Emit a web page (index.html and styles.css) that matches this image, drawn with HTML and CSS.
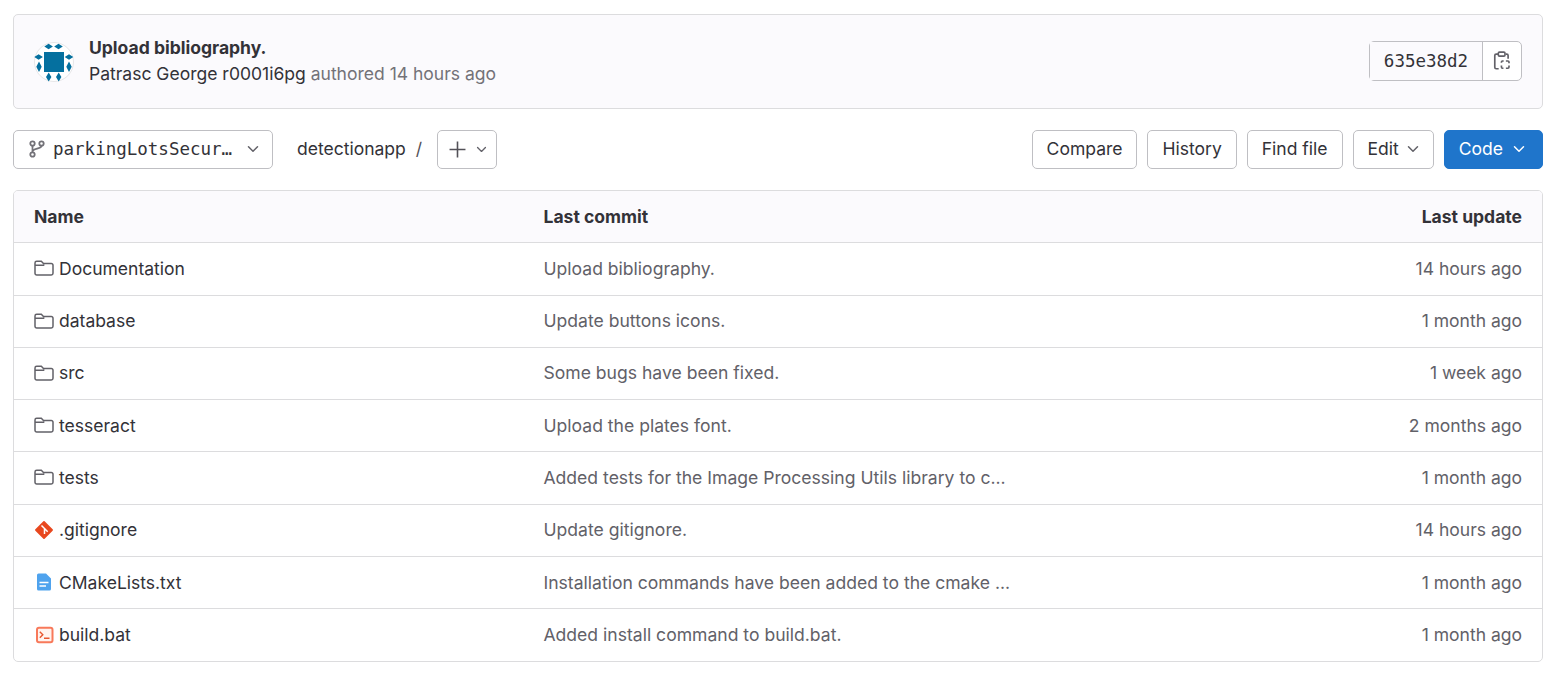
FILE: index.html
```html
<!DOCTYPE html>
<html lang="en">
<head>
<meta charset="utf-8">
<title>detectionapp</title>
<link rel="stylesheet" href="styles.css">
</head>
<body>
<svg class="defs" width="0" height="0" aria-hidden="true">
  <symbol id="folder" viewBox="0 0 20 16"><path d="M1 3A1.700 1.700 0 0 1 2.700 1.300h4.600l2.200 2.200h7.800A1.700 1.700 0 0 1 19 5.200v8.100a1.700 1.700 0 0 1-1.700 1.700H2.700A1.700 1.700 0 0 1 1 13.300z" fill="none" stroke="#626168" stroke-width="1.500"/><path d="M1 5.300h8.500l.8-.8" fill="none" stroke="#626168" stroke-width="1.500"/></symbol>
  <symbol id="chev" viewBox="0 0 12 8"><path d="M1.500 1.700 6 6.200l4.500-4.500" fill="none" stroke="currentColor" stroke-width="1.500" stroke-linecap="round" stroke-linejoin="round"/></symbol>
</svg>
<main class="page">
  <section class="commit">
    <div class="avatar">
      <svg width="40" height="40" viewBox="0 0 40 40">
        <circle cx="20" cy="20" r="19.500" fill="#fff" stroke="#e6e6e8"/>
        <rect x="10" y="10" width="20" height="20" fill="#05709f"/>
        <g fill="#05709f">
          <path d="M10.300 4.500l4.300-2.700 4.300 2.700-4.300 2.700zM20.200 4.500l4.300-2.700 4.300 2.700-4.300 2.700zM.3 15l4.300-2.700 4.300 2.700-4.300 2.700zM30.700 15l4.300-2.700 4.300 2.700-4.300 2.700zM5 19.500l2.700 5.200-2.700 5.200-2.700-5.200zM35 19.500l2.700 5.200-2.700 5.200-2.700-5.200zM14.700 30.500l2.700 4.500-2.700 4.500-2.700-4.500zM24.700 30.500l2.700 4.500-2.700 4.500-2.700-4.500z"/>
        </g>
      </svg>
    </div>
    <div class="commit-text">
      <div class="commit-title">Upload bibliography.</div>
      <div class="commit-meta"><span class="author">Patrasc George r0001i6pg</span> authored 14 hours ago</div>
    </div>
    <div class="sha-group">
      <span class="sha">635e38d2</span>
      <span class="copy">
        <svg width="18" height="20" viewBox="0 0 16 18" fill="none" stroke="#626168" stroke-width="1.500"><path d="M4.500 2.800H2.800A1.300 1.300 0 0 0 1.500 4.100v10.600A1.300 1.300 0 0 0 2.800 16H5M11.500 2.800h.7A1.300 1.300 0 0 1 13.500 4.100V7"/><rect x="4.700" y="1" width="6" height="3.600" rx="1"/><path d="M7.500 10.500V10a1 1 0 0 1 1-1h1M11.500 9h1.800a1 1 0 0 1 1 1v1M14.300 13v1.500a1 1 0 0 1-1 1h-1.800M9.300 15.500H8.500a1 1 0 0 1-1-1V13"/></svg>
      </span>
    </div>
  </section>

  <nav class="toolbar">
    <button class="btn branch">
      <svg width="16" height="18" viewBox="0 0 16 18" fill="none" stroke="#737278" stroke-width="1.800"><circle cx="3.500" cy="3.500" r="2.200"/><circle cx="3.500" cy="14.500" r="2.200"/><circle cx="12.500" cy="3.500" r="2.200"/><path d="M3.500 5.700v6.600M12.500 5.700c0 3.500-9 2.300-9 6"/></svg>
      <span class="branch-name">parkingLotsSecur…</span>
      <svg class="chev" width="12" height="8"><use href="#chev"/></svg>
    </button>
    <span class="crumb">detectionapp</span>
    <span class="slash">/</span>
    <button class="btn add">
      <svg width="17" height="17" viewBox="0 0 16 16" stroke="#535158" stroke-width="1.500"><path d="M8 .5v15M.5 8h15"/></svg>
      <svg class="chev" width="11" height="7"><use href="#chev"/></svg>
    </button>
    <div class="actions">
      <button class="btn">Compare</button>
      <button class="btn">History</button>
      <button class="btn">Find file</button>
      <button class="btn">Edit <svg class="chev" width="12" height="8"><use href="#chev"/></svg></button>
      <button class="btn primary">Code <svg class="chev" width="12" height="8"><use href="#chev"/></svg></button>
    </div>
  </nav>

  <section class="table">
    <div class="row head"><span>Name</span><span>Last commit</span><span class="time">Last update</span></div>
    <div class="row"><span class="name"><svg width="20" height="16"><use href="#folder"/></svg>Documentation</span><span class="msg">Upload bibliography.</span><span class="time">14 hours ago</span></div>
    <div class="row"><span class="name"><svg width="20" height="16"><use href="#folder"/></svg>database</span><span class="msg">Update buttons icons.</span><span class="time">1 month ago</span></div>
    <div class="row"><span class="name"><svg width="20" height="16"><use href="#folder"/></svg>src</span><span class="msg">Some bugs have been fixed.</span><span class="time">1 week ago</span></div>
    <div class="row"><span class="name"><svg width="20" height="16"><use href="#folder"/></svg>tesseract</span><span class="msg">Upload the plates font.</span><span class="time">2 months ago</span></div>
    <div class="row"><span class="name"><svg width="20" height="16"><use href="#folder"/></svg>tests</span><span class="msg">Added tests for the Image Processing Utils library to c...</span><span class="time">1 month ago</span></div>
    <div class="row"><span class="name"><svg width="20" height="18" viewBox="0 0 20 18"><path d="M10 1 18 9l-8 8-8-8z" fill="#e8481f" stroke="#e8481f" stroke-width="1.800" stroke-linejoin="round"/><path d="M7.500 4.500 10.500 7.500v5.500M10.500 7.500l3.200 3.200" stroke="#fff" stroke-width="1.500" fill="none"/></svg>.gitignore</span><span class="msg">Update gitignore.</span><span class="time">14 hours ago</span></div>
    <div class="row"><span class="name"><svg width="20" height="18" viewBox="0 0 20 18"><path d="M3 2A1.500 1.500 0 0 1 4.500.5H12l5 5V16a1.500 1.500 0 0 1-1.500 1.500h-11A1.500 1.500 0 0 1 3 16z" fill="#4fa3ee"/><path d="M5.500 9.500h9M5.500 13h6.500" stroke="#fff" stroke-width="1.400"/></svg>CMakeLists.txt</span><span class="msg">Installation commands have been added to the cmake ...</span><span class="time">1 month ago</span></div>
    <div class="row"><span class="name"><svg width="20" height="18" viewBox="0 0 20 18"><rect x="3" y="1.800" width="15.500" height="14.500" rx="2" fill="#fff3ee" stroke="#f8795a" stroke-width="2"/><path d="M5.800 5.800l3 3-3 3" fill="none" stroke="#e8562e" stroke-width="1.400"/><path d="M10 12.200h5.500" stroke="#e8562e" stroke-width="1.400"/></svg>build.bat</span><span class="msg">Added install command to build.bat.</span><span class="time">1 month ago</span></div>
  </section>
</main>
</body>
</html>
```
FILE: styles.css
```css
* { box-sizing: border-box; }
html, body { margin: 0; background: #fff; }
body {
  font-family: "Inter", "Noto Sans", sans-serif;
  font-size: 17.530px;
  color: #333238;
  overflow: hidden;
}
.defs { position: absolute; }
.page { padding: 14px 7px 0 13px; }

.commit {
  height: 95px;
  display: flex;
  align-items: center;
  padding: 0 20px;
  background: #fbfafd;
  border: 1px solid #dcdcde;
  border-radius: 5px;
}
.avatar { width: 40px; height: 40px; margin-right: 15px; }
.avatar svg { display: block; }
.commit-text { flex: 1; line-height: 26px; margin-top: -2px; }
.commit-title { font-weight: 650; }
.commit-meta { color: #737278; }
.author { color: #333238; }
.sha-group {
  display: flex;
  height: 40px;
  margin-top: -2px;
  border: 1px solid #bfbfc3;
  border-radius: 5px;
  background: #fff;
}
.sha {
  width: 113px;
  display: flex;
  align-items: center;
  justify-content: center;
  font-family: "DejaVu Sans Mono", monospace;
  font-size: 17.500px;
  border-right: 1px solid #bfbfc3;
  background: #fbfafd;
}
.copy {
  width: 38px;
  display: flex;
  align-items: center;
  justify-content: center;
}

.toolbar {
  display: flex;
  align-items: flex-start;
  height: 40px;
  margin-top: 21px;
}
.btn {
  height: 39px;
  display: inline-flex;
  align-items: center;
  gap: 8px;
  padding: 0 14px 2px;
  font: inherit;
  color: #333238;
  background: #fff;
  border: 1px solid #bfbfc3;
  border-radius: 5px;
}
.chev { color: #626168; flex: none; }
.branch { width: 260px; padding: 0 13px 1px 15px; gap: 8px; }
.branch-name {
  font-family: "DejaVu Sans Mono", monospace;
  font-size: 17.500px;
  white-space: nowrap;
  flex: 1;
  text-align: left;
}
.crumb { margin-left: 24px; line-height: 38px; }
.slash { margin: 0 15px 0 10px; line-height: 38px; color: #535158; }
.add { width: 60px; height: 39px; padding: 0 9px 1px 11px; gap: 10px; }
.actions { margin-left: auto; display: flex; gap: 10px; }
.primary {
  gap: 10px;
  padding: 0 17px 2px 14px;
  background: #1f75cb;
  border-color: #1f75cb;
  color: #fff;
}
.primary .chev { color: #fff; }

.table {
  margin-top: 20px;
  border: 1px solid #dcdcde;
  border-radius: 5px;
  overflow: hidden;
}
.row {
  display: grid;
  grid-template-columns: 509.500px 1fr auto;
  align-items: center;
  height: 52.270px;
  padding: 0 20px 1px;
  border-bottom: 1px solid #dcdcde;
}
.row:last-child { border-bottom: 0; }
.head { height: 52.300px; font-weight: 650; background: #fbfafd; }
.name { display: flex; align-items: center; gap: 5px; }
.name svg { flex: none; }
.msg { color: #626168; font-size: 17.570px; }
.time { color: #626168; text-align: right; }
.head .time { color: #333238; }
```
